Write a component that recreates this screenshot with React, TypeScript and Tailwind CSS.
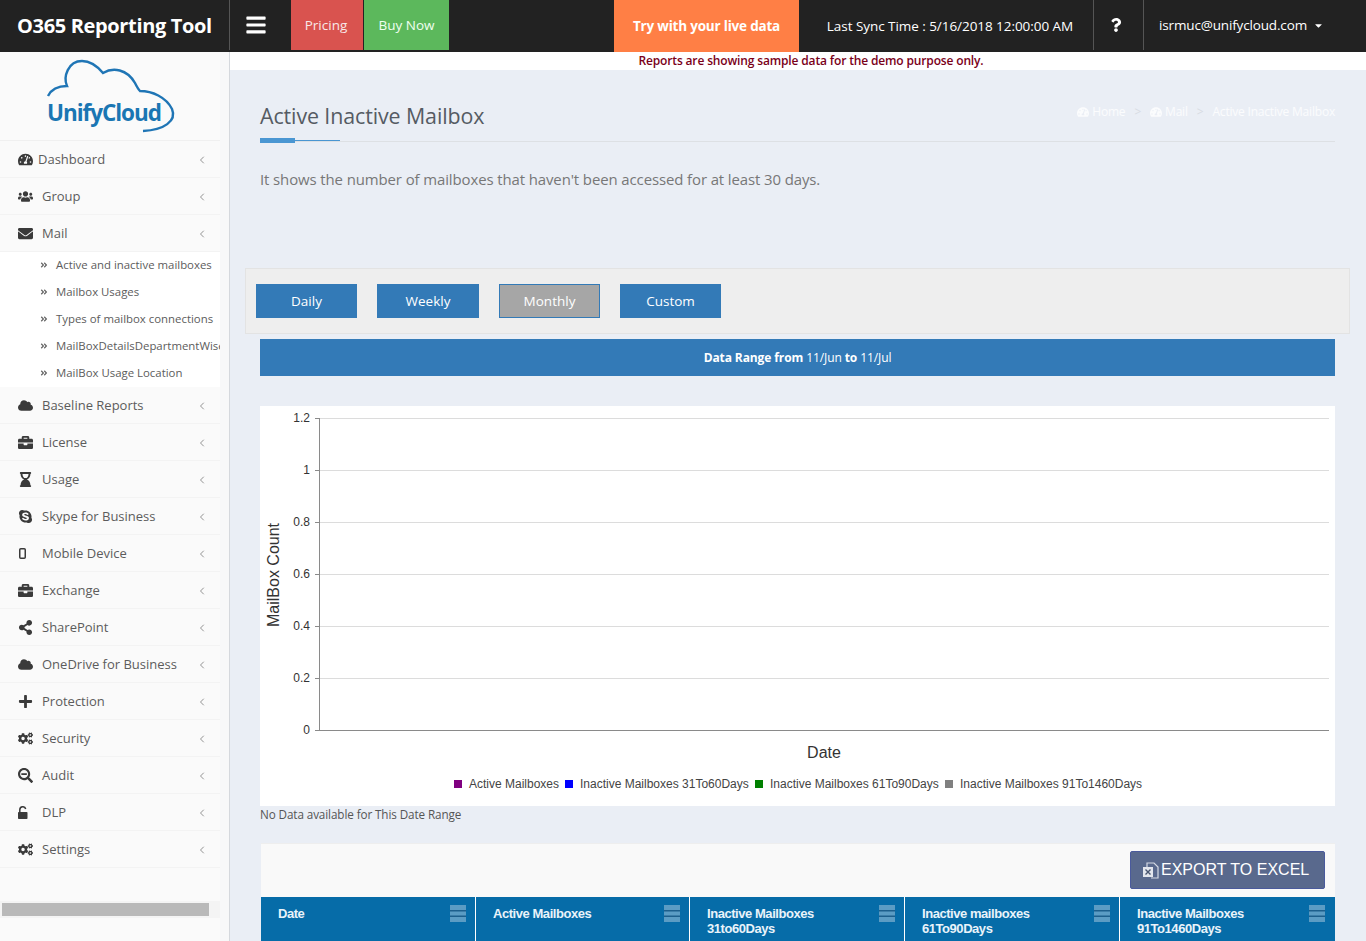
import React from "react";
import {
  FaTachometerAlt, FaUsers, FaEnvelope, FaCloud, FaBriefcase, FaHourglassEnd, FaSkype,
  FaShareAlt, FaPlus, FaCogs, FaSearchMinus, FaAngleDoubleRight, FaBars,
  FaQuestion, FaCaretDown,
} from "react-icons/fa";
import { ChevronLeft } from "lucide-react";

function MobileIcon({ className }: { className?: string }) {
  return (
    <svg width="7" height="11" viewBox="0 0 7 11" className={`ml-[1px] ${className ?? ""}`}>
      <rect x="0.75" y="0.75" width="5.5" height="9.5" rx="1" fill="none" stroke="currentColor" strokeWidth="1.5" />
    </svg>
  );
}

function OpenLockIcon({ className }: { className?: string }) {
  return (
    <svg width="10" height="13" viewBox="0 0 10 13" className={className}>
      <path d="M1.8 6.5 V3.6 a3 3 0 0 1 5.9 -0.6" fill="none" stroke="currentColor" strokeWidth="1.5" />
      <rect x="0" y="6" width="9.5" height="7" rx="0.8" fill="currentColor" />
    </svg>
  );
}

function ExcelIcon() {
  return (
    <svg width="17" height="17" viewBox="0 0 17 17" className="shrink-0">
      <path d="M5 5 V1 H12 L16 5 V16 H9" fill="none" stroke="#d5dae4" strokeWidth="1.2" />
      <rect x="1" y="5" width="10" height="10" fill="#e3e6ed" />
      <path d="M3.5 7.5 L8.5 12.5 M8.5 7.5 L3.5 12.5" stroke="#48556f" strokeWidth="1.4" />
    </svg>
  );
}

const before = [
  { label: "Dashboard", Icon: FaTachometerAlt, gap: "w-[20px]" },
  { label: "Group", Icon: FaUsers, gap: "w-[24px]" },
  { label: "Mail", Icon: FaEnvelope, gap: "w-[24px]" },
];
const subs = ["Active and inactive mailboxes", "Mailbox Usages", "Types of mailbox connections", "MailBoxDetailsDepartmentWise", "MailBox Usage Location"];
const after = [
  { label: "Baseline Reports", Icon: FaCloud },
  { label: "License", Icon: FaBriefcase },
  { label: "Usage", Icon: FaHourglassEnd },
  { label: "Skype for Business", Icon: FaSkype },
  { label: "Mobile Device", Icon: MobileIcon },
  { label: "Exchange", Icon: FaBriefcase },
  { label: "SharePoint", Icon: FaShareAlt },
  { label: "OneDrive for Business", Icon: FaCloud },
  { label: "Protection", Icon: FaPlus },
  { label: "Security", Icon: FaCogs },
  { label: "Audit", Icon: FaSearchMinus },
  { label: "DLP", Icon: OpenLockIcon },
  { label: "Settings", Icon: FaCogs },
];

function NavItem({ label, Icon, gap = "w-[24px]" }: { label: string; Icon: React.ComponentType<{ className?: string }>; gap?: string }) {
  return (
    <div className="flex h-[37px] items-center border-b border-[#f3f3f3] pl-[18px] pr-[12px] pt-[1px] text-[13px] text-[#5c5c5c]">
      <span className={`${gap} shrink-0`}>
        <Icon className="text-[15px] text-[#3a3a3a]" />
      </span>
      <span className="flex-1 whitespace-nowrap">{label}</span>
      <ChevronLeft size={12} strokeWidth={1.6} className="text-[#777]" />
    </div>
  );
}

function MenuBars() {
  return (
    <svg width="16" height="17" viewBox="0 0 16 17" className="-mt-[1px] shrink-0">
      <rect width="16" height="17" fill="#5b9cc4" />
      <rect y="5" width="16" height="1.5" fill="#1d5f8c" />
      <rect y="10.5" width="16" height="1.5" fill="#1d5f8c" />
    </svg>
  );
}

function Logo() {
  return (
    <svg width="135" height="76" viewBox="0 0 135 76">
      <path
        d="M4 39 C8 31 16 29 23 29 C19 20 24 4 38 4 C48 4 54 10 59 16 C69 10 83 12 91 26 C93 30 95 33 96 34 C108 34 122 40 128 52 C133 64 120 73 99 74"
        fill="none"
        stroke="#1f75b5"
        strokeWidth="2.4"
      />
      <text x="3" y="64" fontFamily="'Open Sans', sans-serif" fontWeight="700" fontSize="22.5" fill="#1a76b3" textLength="115">UnifyCloud</text>
    </svg>
  );
}

function Chart() {
  const ticks = [
    { l: "1.2", y: 418 }, { l: "1", y: 470 }, { l: "0.8", y: 522 }, { l: "0.6", y: 574 },
    { l: "0.4", y: 626 }, { l: "0.2", y: 678 }, { l: "0", y: 730 },
  ];
  const legend = [
    { c: "#800080", x: 194, t: "Active Mailboxes", tx: 209 },
    { c: "#0000ff", x: 305, t: "Inactive Mailboxes 31To60Days", tx: 320 },
    { c: "#008000", x: 495, t: "Inactive Mailboxes 61To90Days", tx: 510 },
    { c: "#808080", x: 685, t: "Inactive Mailboxes 91To1460Days", tx: 700 },
  ];
  return (
    <svg width="1075" height="400" viewBox="0 0 1075 400" className="block bg-white" fontFamily="'Liberation Sans', sans-serif">
      {ticks.map((t) => {
        const y = t.y - 406;
        return (
          <g key={t.l}>
            <line x1="59" x2="1069" y1={y + 0.5} y2={y + 0.5} stroke={t.l === "0" ? "#8a8a8a" : "#dcdcdc"} />
            <line x1="55" x2="59" y1={y + 0.5} y2={y + 0.5} stroke="#8a8a8a" />
            <text x="50" y={y + 4} textAnchor="end" fontSize="12" fill="#333">{t.l}</text>
          </g>
        );
      })}
      <line x1="59.5" x2="59.5" y1="12" y2="324" stroke="#8a8a8a" />
      <text transform="translate(19 169) rotate(-90)" textAnchor="middle" fontSize="16" fill="#333">MailBox Count</text>
      <text x="564" y="352" textAnchor="middle" fontSize="16" fill="#333">Date</text>
      {legend.map((l) => (
        <g key={l.t}>
          <rect x={l.x} y="374" width="8" height="8" fill={l.c} />
          <text x={l.tx} y="382" fontSize="12" fill="#444">{l.t}</text>
        </g>
      ))}
    </svg>
  );
}

const periods = ["Daily", "Weekly", "Monthly", "Custom"];
const columns = [
  { w: "w-[214px]", a: "Date", b: "" },
  { w: "w-[214px]", a: "Active Mailboxes", b: "" },
  { w: "w-[215px]", a: "Inactive Mailboxes", b: "31to60Days" },
  { w: "w-[215px]", a: "Inactive mailboxes", b: "61To90Days" },
  { w: "w-[216px]", a: "Inactive Mailboxes", b: "91To1460Days" },
];

export default function App() {
  const sans = "font-['Open_Sans',sans-serif]";
  return (
    <div className={`flex h-[941px] w-[1366px] flex-col overflow-hidden bg-[#eaeef5] ${sans}`}>
      <header className="flex h-[52px] shrink-0 bg-[#222] text-white">
        <div className="flex h-[50px] w-[230px] shrink-0 items-center border-r border-[#555] pl-[17px] pt-[2px] text-[20px] font-bold tracking-[-0.35px] whitespace-nowrap">
          O365 Reporting Tool
        </div>
        <div className="flex w-[61px] shrink-0 items-start justify-start pl-[15px] pt-[14px]">
          <FaBars className="text-[22px]" />
        </div>
        <div className="flex h-[50px] w-[72px] items-center justify-center bg-[#d9534f] pr-[2px] text-[13.5px] text-[#f8e8e8]">Pricing</div>
        <div className="ml-px flex h-[50px] w-[85px] items-center justify-center bg-[#5cb85c] text-[13.5px] text-[#f0fff0]">Buy Now</div>
        <div className="w-[165px]" />
        <div className="flex h-[52px] w-[185px] items-center justify-center bg-[#ff7f45] text-[13.5px] font-bold tracking-[-0.2px]">Try with your live data</div>
        <div className="flex w-[294px] items-center justify-center pl-[8px] text-[13.5px] tracking-[-0.05px] whitespace-nowrap">Last Sync Time : 5/16/2018 12:00:00 AM</div>
        <div className="flex h-[50px] w-[51px] items-center justify-center border-x border-[#555] pr-[5px]">
          <FaQuestion className="text-[14px]" />
        </div>
        <div className="flex items-center pb-[2px] pl-[15px] text-[13.5px] tracking-[-0.15px] whitespace-nowrap">
          isrmuc@unifycloud.com
          <FaCaretDown className="ml-[6px] text-[11px]" />
        </div>
      </header>

      <div className="flex min-h-0 flex-1">
        <aside className="flex w-[230px] shrink-0 flex-col border-r border-[#d5d8dd] bg-[#f8f8f9]">
          <div className="flex min-h-0 w-[220px] flex-1 flex-col bg-[#fafafa]">
            <div className="-mt-[2px] flex h-[91px] shrink-0 items-start justify-center border-b border-[#f0f0f0] pl-[3px] pt-[7px]">
              <Logo />
            </div>
            {before.map((n) => <NavItem key={n.label} {...n} />)}
            <div className="flex h-[135px] shrink-0 flex-col overflow-hidden bg-white py-0 pl-[40px] text-[11.4px] text-[#5c5c5c]">
              {subs.map((s) => (
                <div key={s} className="flex h-[27px] shrink-0 items-center pb-[2px] whitespace-nowrap">
                  <FaAngleDoubleRight className="mr-[8px] shrink-0 text-[8px] text-[#666]" />
                  {s}
                </div>
              ))}
            </div>
            {after.map((n) => <NavItem key={n.label} {...n} />)}
            <div className="mt-[33px] h-[17px] shrink-0 bg-[#f4f4f4] px-[2px] py-[2px]">
              <div className="h-[13px] w-[207px] bg-[#b9b9b9]" />
            </div>
          </div>
        </aside>

        <main className="min-w-0 flex-1">
          <div className="h-[18px] bg-white pl-[26px] text-center text-[12px] leading-[18px] font-semibold tracking-[-0.15px] text-[#7a0019]">
            Reports are showing sample data for the demo purpose only.
          </div>
          <div className="pt-[31px] pl-[30px] pr-[31px]">
            <div className="relative flex h-[41px] items-start justify-between border-b border-[#dde0e4]">
              <h1 className="text-[21.4px] leading-[30px] tracking-[-0.1px] text-[#555b63]">Active Inactive Mailbox</h1>
              <div className="flex items-center gap-[8px] pt-[2px] text-[12px] tracking-[-0.2px] text-white/80">
                <span className="flex items-center gap-[3px]"><FaTachometerAlt className="text-[12px]" />Home</span>
                <span className="px-[1px] text-[#d8dce3]">&gt;</span>
                <span className="flex items-center gap-[3px]"><FaTachometerAlt className="text-[12px]" />Mail</span>
                <span className="px-[1px] text-[#d8dce3]">&gt;</span>
                <span>Active Inactive Mailbox</span>
              </div>
              <div className="absolute -bottom-[2px] left-0 flex items-center">
                <div className="h-[5px] w-[35px] bg-[#4a96d2]" />
                <div className="h-px w-[45px] bg-[#4a96d2]" />
              </div>
            </div>
            <p className="mt-[27px] text-[14.95px] leading-[20px] tracking-[-0.1px] text-[#777]">
              It shows the number of mailboxes that haven&apos;t been accessed for at least 30 days.
            </p>
          </div>

          <div className="mt-[79px] ml-[15px] flex h-[66px] w-[1105px] items-center gap-[20px] border border-[#e3e3e3] bg-[#eeeeee] pl-[10px]">
            {periods.map((p) => (
              <button
                key={p}
                className={`h-[34px] text-[13.5px] text-white ${p === "Weekly" ? "w-[102px]" : "w-[101px]"} ${p === "Monthly" ? "border border-[#337ab7] bg-[#a6a6a6]" : "bg-[#337ab7]"}`}
              >
                {p}
              </button>
            ))}
          </div>

          <div className="mx-[31px] mt-[5px] ml-[30px] flex h-[37px] items-center justify-center bg-[#337ab7] text-[12px] tracking-[-0.1px] text-white">
            <b>Data Range from</b>&nbsp;11/Jun&nbsp;<b>to</b>&nbsp;11/Jul
          </div>

          <div className="mt-[30px] ml-[30px] w-[1075px]">
            <Chart />
          </div>
          <div className="ml-[30px] h-[18px] text-[11.7px] leading-[16px] tracking-[-0.1px] text-[#555]">No Data available for This Date Range</div>

          <div className="mt-[19px] ml-[31px] w-[1074px] border-t border-[#eee] bg-[#f9f9f9]">
            <div className="flex h-[53px] items-start justify-end pt-[7px] pr-[10px]">
              <button className="flex h-[38px] w-[195px] items-center justify-start gap-[2px] rounded-[2px] border border-[#4a5a9c] bg-[#59698d] pl-[11px] font-['Liberation_Sans',sans-serif] text-[16px] text-white">
                <ExcelIcon />
                EXPORT TO EXCEL
              </button>
            </div>
            <div className="flex h-[60px] bg-[#066ca8] font-['Liberation_Sans',sans-serif] text-[13px] leading-[15px] font-bold tracking-[-0.45px] text-[#e9f3fa]">
              {columns.map((c, i) => (
                <div key={i} className={`${c.w} flex shrink-0 items-start justify-between pt-[9px] pl-[17px] ${i === 4 ? "pr-[10px]" : "pr-[9px]"} ${i > 0 ? "border-l border-white" : ""}`}>
                  <div>
                    <div>{c.a}</div>
                    {c.b && <div>{c.b}</div>}
                  </div>
                  <MenuBars />
                </div>
              ))}
            </div>
          </div>
        </main>
      </div>
    </div>
  );
}
